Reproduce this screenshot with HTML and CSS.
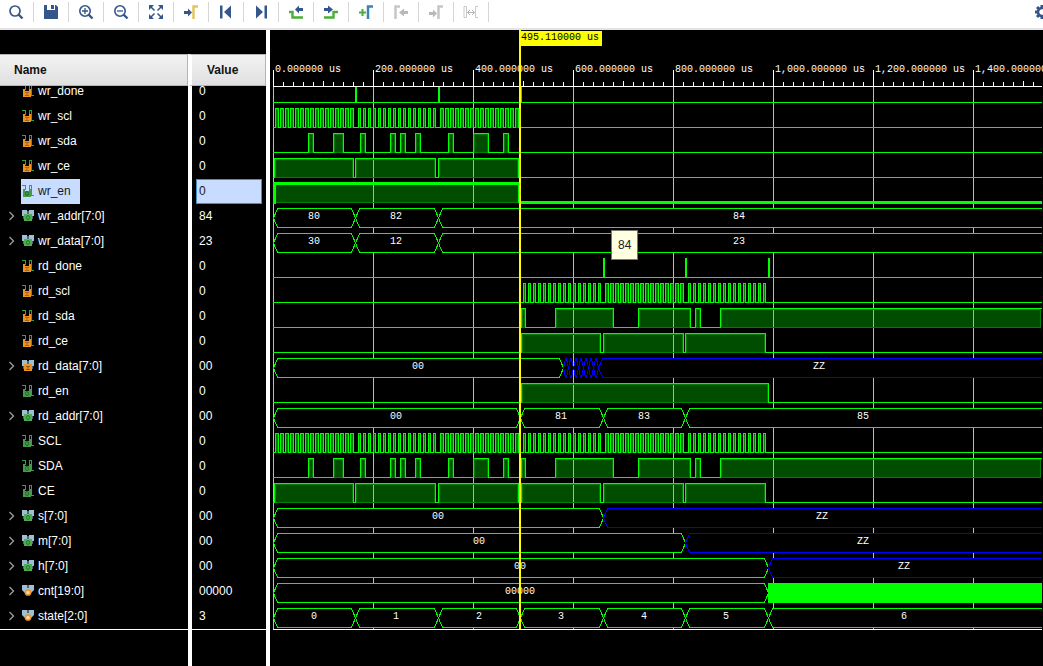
FILE: index.html
```html
<!DOCTYPE html>
<html lang="en">
<head>
<meta charset="utf-8">
<title>Waveform viewer</title>
<link rel="stylesheet" href="styles.css">
</head>
<body>
<svg class="defs" aria-hidden="true">
  <symbol id="pin-in" viewBox="0 0 12 13">
    <path d="M0 1.500h4M3.500 1v5M7.500 1v10M7 1.500h3M9.500 1v10.500M9 11.500h3" fill="none" stroke="#2fa548"/>
    <path d="M1 5h2v2h4V5h2v8H1z" fill="#f0921e"/>
    <path d="M3 8.500h4M5 8v4M3 11.500h4" fill="none" stroke="#a8651a"/>
  </symbol>
  <symbol id="pin-out" viewBox="0 0 12 13">
    <path d="M0 1.500h4M3.500 1v5M7.500 1v10M7 1.500h3M9.500 1v10.500M9 11.500h3" fill="none" stroke="#2fa548"/>
    <path d="M1 5h2v2h4V5h2v8H1z" fill="#459b4a"/>
    <ellipse cx="5" cy="9.500" rx="1.500" ry="2" fill="none" stroke="#25652c"/>
  </symbol>
  <symbol id="bus-in" viewBox="0 0 12 13">
    <path d="M0 1h5v2h2V1h5v6H0z" fill="#9cc0d6"/><path d="M1 7h10v3H1zM5 2h2v3H5z" fill="#55636b"/>
    <path d="M2 5h3l1 1 1-1h3v7H2z" fill="#f0921e"/><path d="M4 7.500h4M6 7v4M4 10.500h4" fill="none" stroke="#8f5812"/>
  </symbol>
  <symbol id="bus-out" viewBox="0 0 12 13">
    <path d="M0 1h5v2h2V1h5v6H0z" fill="#9cc0d6"/><path d="M1 7h10v3H1zM5 2h2v3H5z" fill="#55636b"/>
    <path d="M2 5h3l1 1 1-1h3v7H2z" fill="#4caf50"/><ellipse cx="6" cy="8.500" rx="1.500" ry="2" fill="none" stroke="#27722e"/>
  </symbol>
  <symbol id="bus-net" viewBox="0 0 12 13">
    <path d="M0 1h5v2h2V1h5v5L9 9H3L0 6z" fill="#9cc0d6"/><path d="M5 1h2v3H5z" fill="#55636b"/>
    <circle cx="6" cy="8.500" r="2.600" fill="#fbd9a0" stroke="#f0921e" stroke-width="1.500"/>
  </symbol>
  <symbol id="chevron" viewBox="0 0 6 10"><path d="M1 1l4 4-4 4" fill="none" stroke="#9a9a9a" stroke-width="1.400"/></symbol>
</svg>

<header class="toolbar" role="toolbar" aria-label="Waveform tools">
  <button class="tool" aria-label="Search"><svg viewBox="0 0 16 16"><circle cx="7" cy="7" r="5" fill="none" stroke="#34568b" stroke-width="1.700"/><path d="M10.500 10.500l4 4" stroke="#34568b" stroke-width="2.400"/></svg></button>
  <button class="tool" aria-label="Save"><svg viewBox="0 0 16 16"><path d="M1 1h3v5h8V1h1l2 2v12H1zM8 1h3v4H8z" fill="#34568b"/></svg></button>
  <button class="tool" aria-label="Zoom in"><svg viewBox="0 0 16 16"><circle cx="7" cy="7" r="5.200" fill="none" stroke="#34568b" stroke-width="1.600"/><path d="M4 7h6M7 4v6" stroke="#34568b" stroke-width="1.300"/><path d="M10.500 10.500l4 4" stroke="#34568b" stroke-width="2.400"/></svg></button>
  <button class="tool" aria-label="Zoom out"><svg viewBox="0 0 16 16"><circle cx="7" cy="7" r="5.200" fill="none" stroke="#34568b" stroke-width="1.600"/><path d="M4 7h6" stroke="#34568b" stroke-width="1.300"/><path d="M10.500 10.500l4 4" stroke="#34568b" stroke-width="2.400"/></svg></button>
  <button class="tool" aria-label="Zoom fit"><svg viewBox="0 0 16 16"><path d="M1 1h5L1 6zM15 1h-5l5 5zM1 15h5l-5-5zM15 15h-5l5-5z" fill="#34568b"/><path d="M3 3l3.500 3.500M13 3L9.500 6.500M3 13l3.500-3.500M13 13L9.500 9.500" stroke="#34568b" stroke-width="1.500"/></svg></button>
  <button class="tool" aria-label="Go to cursor"><svg viewBox="0 0 16 16"><path d="M1 7h4V4.500l4 4-4 4V10H1z" fill="#34568b"/><path d="M10.500 15V2.500H15" fill="none" stroke="#e3c55c" stroke-width="2.500"/></svg></button>
  <button class="tool" aria-label="Go to start"><svg viewBox="0 0 16 16"><path d="M2 1.500h2.500v13H2zM13 1.500v13L6 8z" fill="#34568b"/></svg></button>
  <button class="tool" aria-label="Go to end"><svg viewBox="0 0 16 16"><path d="M11.500 1.500H14v13h-2.500zM3 1.500v13L10 8z" fill="#34568b"/></svg></button>
  <button class="tool" aria-label="Previous transition"><svg viewBox="0 0 16 16"><path d="M1 8h3.500v5.500H15" fill="none" stroke="#49b035" stroke-width="2.400"/><path d="M15 4h-4V1.500L7 5.500l4 4V7h4z" fill="#34568b"/></svg></button>
  <button class="tool" aria-label="Next transition"><svg viewBox="0 0 16 16"><path d="M1 13.500h9.500V8H15" fill="none" stroke="#49b035" stroke-width="2.400"/><path d="M1 4h4V1.500l5 4-5 4V7H1z" fill="#34568b"/></svg></button>
  <button class="tool" aria-label="Add marker"><svg viewBox="0 0 16 16"><path d="M1 8.500h7M4.500 5v7" stroke="#49b035" stroke-width="2"/><path d="M10 15V2.500h5" fill="none" stroke="#3c82b5" stroke-width="2.500"/></svg></button>
  <button class="tool" aria-label="Previous marker" disabled><svg viewBox="0 0 16 16"><path d="M2.500 15V2.500H7" fill="none" stroke="#c6c6c6" stroke-width="2.500"/><path d="M15 7h-4V4.500l-5 4 5 4V10h4z" fill="#b9b9b9"/></svg></button>
  <button class="tool" aria-label="Next marker" disabled><svg viewBox="0 0 16 16"><path d="M1 8h4V5.500l4 4-4 4V11H1z" fill="#b9b9b9"/><path d="M10.500 15V2.500H15" fill="none" stroke="#c6c6c6" stroke-width="2.500"/></svg></button>
  <button class="tool" aria-label="Swap cursors" disabled><svg viewBox="0 0 16 16"><path d="M1 2.500h2.500v11H1zM15 2.500h-2.500v11H15" fill="none" stroke="#c9c9c9"/><path d="M4 8.500h8M7 6L4.500 8.500 7 11M9 6l2.500 2.500L9 11" fill="none" stroke="#b4b4b4"/></svg></button>
  <button class="tool settings" aria-label="Settings"><svg viewBox="0 0 16 16"><path d="M8 1v14M1 8h14M3 3l10 10M13 3L3 13" stroke="#34568b" stroke-width="3"/><circle cx="8" cy="8" r="4" fill="#fff" stroke="#34568b" stroke-width="2.500"/></svg></button>
</header>

<main class="viewer">
  <section class="signals">
    <table class="signal-table">
      <thead><tr><th class="col-name">Name</th><th class="col-value">Value</th></tr></thead>
      <tbody>
        <tr class="scrolled"><td><div class="cell"><svg class="kind"><use href="#pin-in"/></svg>wr_done</div></td><td><div class="val">0</div></td></tr>
        <tr><td><div class="cell"><svg class="kind"><use href="#pin-in"/></svg>wr_scl</div></td><td><div class="val">0</div></td></tr>
        <tr><td><div class="cell"><svg class="kind"><use href="#pin-in"/></svg>wr_sda</div></td><td><div class="val">0</div></td></tr>
        <tr><td><div class="cell"><svg class="kind"><use href="#pin-in"/></svg>wr_ce</div></td><td><div class="val">0</div></td></tr>
        <tr class="selected"><td><div class="cell"><svg class="kind"><use href="#pin-out"/></svg>wr_en</div></td><td><div class="val">0</div></td></tr>
        <tr><td><div class="cell bus"><button class="expand" aria-label="Expand wr_addr"><svg><use href="#chevron"/></svg></button><svg class="kind"><use href="#bus-out"/></svg>wr_addr[7:0]</div></td><td><div class="val">84</div></td></tr>
        <tr><td><div class="cell bus"><button class="expand" aria-label="Expand wr_data"><svg><use href="#chevron"/></svg></button><svg class="kind"><use href="#bus-out"/></svg>wr_data[7:0]</div></td><td><div class="val">23</div></td></tr>
        <tr><td><div class="cell"><svg class="kind"><use href="#pin-in"/></svg>rd_done</div></td><td><div class="val">0</div></td></tr>
        <tr><td><div class="cell"><svg class="kind"><use href="#pin-in"/></svg>rd_scl</div></td><td><div class="val">0</div></td></tr>
        <tr><td><div class="cell"><svg class="kind"><use href="#pin-in"/></svg>rd_sda</div></td><td><div class="val">0</div></td></tr>
        <tr><td><div class="cell"><svg class="kind"><use href="#pin-in"/></svg>rd_ce</div></td><td><div class="val">0</div></td></tr>
        <tr><td><div class="cell bus"><button class="expand" aria-label="Expand rd_data"><svg><use href="#chevron"/></svg></button><svg class="kind"><use href="#bus-in"/></svg>rd_data[7:0]</div></td><td><div class="val">00</div></td></tr>
        <tr><td><div class="cell"><svg class="kind"><use href="#pin-out"/></svg>rd_en</div></td><td><div class="val">0</div></td></tr>
        <tr><td><div class="cell bus"><button class="expand" aria-label="Expand rd_addr"><svg><use href="#chevron"/></svg></button><svg class="kind"><use href="#bus-out"/></svg>rd_addr[7:0]</div></td><td><div class="val">00</div></td></tr>
        <tr><td><div class="cell"><svg class="kind"><use href="#pin-out"/></svg>SCL</div></td><td><div class="val">0</div></td></tr>
        <tr><td><div class="cell"><svg class="kind"><use href="#pin-out"/></svg>SDA</div></td><td><div class="val">0</div></td></tr>
        <tr><td><div class="cell"><svg class="kind"><use href="#pin-out"/></svg>CE</div></td><td><div class="val">0</div></td></tr>
        <tr><td><div class="cell bus"><button class="expand" aria-label="Expand s"><svg><use href="#chevron"/></svg></button><svg class="kind"><use href="#bus-out"/></svg>s[7:0]</div></td><td><div class="val">00</div></td></tr>
        <tr><td><div class="cell bus"><button class="expand" aria-label="Expand m"><svg><use href="#chevron"/></svg></button><svg class="kind"><use href="#bus-out"/></svg>m[7:0]</div></td><td><div class="val">00</div></td></tr>
        <tr><td><div class="cell bus"><button class="expand" aria-label="Expand h"><svg><use href="#chevron"/></svg></button><svg class="kind"><use href="#bus-out"/></svg>h[7:0]</div></td><td><div class="val">00</div></td></tr>
        <tr><td><div class="cell bus"><button class="expand" aria-label="Expand cnt"><svg><use href="#chevron"/></svg></button><svg class="kind"><use href="#bus-net"/></svg>cnt[19:0]</div></td><td><div class="val">00000</div></td></tr>
        <tr><td><div class="cell bus"><button class="expand" aria-label="Expand state"><svg><use href="#chevron"/></svg></button><svg class="kind"><use href="#bus-net"/></svg>state[2:0]</div></td><td><div class="val">3</div></td></tr>
        <tr class="filler"><td></td><td></td></tr>
      </tbody>
    </table>
  </section>
  <section class="waves">
    <svg id="plot" class="plot" role="img" aria-label="Signal waveforms"></svg>
    <div class="tooltip" role="tooltip">84</div>
  </section>
</main>
<script src="waves.js"></script>
</body>
</html>
```

FILE: styles.css
```css
* { box-sizing: border-box; }

body {
  margin: 0;
  min-height: 100vh;
  display: flex;
  flex-direction: column;
  overflow: hidden;
  background: #000;
  color: #fff;
  font: 12px/16px "Liberation Sans", Arial, sans-serif;
}

.defs { display: none; }

button {
  margin: 0;
  padding: 0;
  border: 0;
  background: none;
}

.toolbar {
  display: flex;
  align-items: flex-start;
  height: 30px;
  padding-top: 2px;
  overflow: hidden;
  background: #fff;
  border-bottom: 2px solid #e4e4e6;
}

.tool {
  flex: none;
  display: flex;
  align-items: center;
  justify-content: center;
  width: 35px;
  height: 20px;
  padding-right: 1px;
  border-right: 1px solid #d6d6d6;
}

.tool:first-child { width: 34px; }
.tool svg { width: 16px; height: 16px; }

.tool.settings {
  width: 16px;
  margin-left: auto;
  margin-right: -7px;
  padding: 0;
  border: 0;
}

.viewer {
  flex: 1;
  display: flex;
}

.signals {
  flex: none;
  display: flex;
  width: 270px;
  padding-top: 24px;
  border-right: 4px solid #fff;
}

.signal-table {
  width: 100%;
  table-layout: fixed;
  border-spacing: 0;
}

th {
  position: relative;
  z-index: 1;
  height: 32px;
  padding: 0 14px;
  text-align: left;
  color: #111;
  background: linear-gradient(#f3f3f3, #dfdfe1);
  background-clip: padding-box;
  border: 1px solid #b4b4b6;
  border-left: 0;
}

.col-name { width: 188px; }

.col-value {
  padding-left: 15px;
  border-left: 4px solid #fff;
}

td { height: 25px; padding: 0; }
td + td { border-left: 4px solid #fff; }

.cell {
  display: flex;
  align-items: center;
  gap: 4px;
  width: max-content;
  height: 25px;
  margin-left: 21px;
  padding: 0 9px 2px 1px;
}

.cell.bus { margin-left: 8px; padding-left: 0; }

.kind { width: 12px; height: 13px; }

.expand {
  display: flex;
  align-items: center;
  width: 10px;
  height: 16px;
}

.expand svg { width: 7px; height: 10px; }

.val {
  height: 25px;
  margin: 0 4px;
  padding: 0 2px;
  line-height: 22px;
  border: 1px solid transparent;
}

.scrolled td { height: 18px; }
.scrolled .cell, .scrolled .val { margin-top: -7px; }

.selected .cell, .selected .val { background: #c8dcff; color: #1a1a1a; }
.selected .val { border-color: #3f8ed0; }

.filler td { height: auto; border-top: 1px solid #fff; }

.waves {
  position: relative;
  flex: 1;
  min-width: 0;
  display: flex;
}

.plot {
  width: 100%;
  min-height: 601px;
  shape-rendering: crispEdges;
  font: 10px "Liberation Mono", monospace;
}

.plot text { fill: #fff; }
.plot .mid { text-anchor: middle; }
.grid { stroke: #bcbcbc; }
.ruler { stroke: #fff; fill: none; }
.band { fill: #000; }
.trace { stroke: #0f0; fill: none; }
.trace.strong { stroke-width: 3px; }
.high { fill: rgba(0, 255, 0, 0.3); }
.inner { stroke: #008000; fill: none; }
.segment { stroke: #0f0; fill: none; }
.segment.float { stroke: #00f; }
.busy { fill: #0f0; }
.cursor, .flag { fill: #ff0; }
.plot .flag-text { fill: #000; }

.tooltip {
  position: absolute;
  left: 341px;
  top: 200px;
  padding: 6px;
  background: #ffffe1;
  border: 1px solid #77776a;
  color: #222;
}
```

FILE: waves.js
```js
// One horizontal unit is 2 us; x = 0 is the start of the simulation.
const plot = document.getElementById('plot');
const ORIGIN = 3, RULER = 56, FIRST = 61, STEP = 25, BOTTOM = 599, CURSOR = 246;

const burst = (start, width) =>
  Array.from({ length: 16 }, (_, k) => [start + 5 * k, start + 5 * k + width]);

function signals(end) {
  const wrScl = [...burst(2, 3), ...burst(85, 2), ...burst(167, 3)];
  const rdScl = [...burst(250, 2), ...burst(332, 3), ...burst(415, 2)];
  const wrSda = [[35, 40], [60, 70], [87, 92], [117, 122], [127, 132], [142, 147], [175, 180], [200, 215], [230, 235]];
  const rdSda = [[248, 252], [282, 340], [365, 417], [422, 427], [447, end]];
  const wrCe = [[1, 80], [82, 162], [165, 245]];
  const rdCe = [[248, 327], [330, 410], [412, 492]];
  const toggles = Array.from({ length: 7 }, (_, k) => [290 + 5 * k, 295 + 5 * k, '', 'float']);
  return [
    { bits: [[82, 83], [165, 166], [247, 248]] },
    { bits: wrScl },
    { bits: wrSda },
    { bits: wrCe },
    { bits: [[1, 246]], strong: true },
    { bus: [[0, 82, '80'], [82, 165, '82'], [165, end, '84']] },
    { bus: [[0, 82, '30'], [82, 165, '12'], [165, end, '23']] },
    { bits: [[330, 331], [412, 413], [495, 496]] },
    { bits: rdScl },
    { bits: rdSda },
    { bits: rdCe },
    { bus: [[0, 290, '00'], ...toggles, [325, end, 'ZZ', 'float']] },
    { bits: [[248, 495]] },
    { bus: [[0, 247, '00'], [247, 330, '81'], [330, 412, '83'], [412, end, '85']] },
    { bits: [...wrScl, ...rdScl] },
    { bits: [...wrSda, ...rdSda] },
    { bits: [...wrCe, ...rdCe] },
    { bus: [[0, 330, '00'], [330, end, 'ZZ', 'float']] },
    { bus: [[0, 412, '00'], [412, end, 'ZZ', 'float']] },
    { bus: [[0, 495, '00'], [495, end, 'ZZ', 'float']] },
    { bus: [[0, 495, '00000'], [495, end, '', 'busy']] },
    { bus: [[0, 82, '0'], [82, 165, '1'], [165, 247, '2'], [247, 330, '3'], [330, 412, '4'], [412, 495, '5'], [495, end, '6']] },
  ];
}

function drawBits(sig, hi, lo, end) {
  let line = `M0 ${lo + 0.5}`, out = '';
  for (const [a, b] of sig.bits) {
    if (b - a > 1) {
      out += `<rect class="high" x="${a}" y="${hi}" width="${b - a}" height="${lo - hi}"/>`;
      out += `<path class="inner" d="M${a + 1.5} ${lo + 0.5}V${hi + 1.5}H${b - 0.5}V${lo + 0.5}z"/>`;
    }
    line += `H${a + 0.5}V${hi + 0.5}H${b + 0.5}`;
    if (b < end) line += `V${lo + 0.5}`;
    line += `M${b + 0.5} ${lo + 0.5}`;
    if (b - a === 1) line += `H${a + 0.5}`;
  }
  if (sig.bits[sig.bits.length - 1][1] < end) line += `H${end + 1}`;
  // The line under a high level is the darker inner one.
  return out + `<path class="trace${sig.strong ? ' strong' : ''}" d="${line}"/>`;
}

function drawBus(sig, hi, lo, end) {
  const top = hi + 0.5, bottom = lo + 0.5, mid = (top + bottom) / 2;
  return sig.bus.map(([a, b, text, kind]) => {
    if (kind === 'busy') return `<rect class="busy" x="${a}" y="${hi}" width="${b - a + 1}" height="${lo - hi + 1}"/>`;
    const s = b - a < 8 ? 2 : 4, l = a + 0.5, r = b + 0.5;
    const right = b === end ? `H${r}V${bottom}` : `H${r - s}L${r} ${mid}L${r - s} ${bottom}`;
    const fill = `<path class="band" d="M${l} ${mid}L${l + s} ${top}${right}H${l + s}z"/>`;
    const tail = b === end ? `H${r}M${r} ${bottom}` : `H${r - s}L${r} ${mid}L${r - s} ${bottom}`;
    return fill + `<path class="segment ${kind || ''}" d="M${l} ${mid}L${l + s} ${top}${tail}H${l + s}L${l} ${mid}"/>` +
      (text ? `<text class="mid" x="${Math.floor((a + b) / 2)}" y="${hi + 11}">${text}</text>` : '');
  }).join('');
}

function draw() {
  const end = plot.clientWidth - ORIGIN - 2;
  let grid = '', ticks = `M0 ${RULER + 0.5}H${end + 1}`, labels = '', rows = '';
  for (let x = 0; x <= end; x += 10) {
    const major = x % 100 === 0;
    ticks += `M${x + 0.5} ${major ? 40 : x % 50 === 0 ? 51 : 52}V${RULER}`;
    if (major) {
      grid += `M${x + 0.5} ${RULER}V${BOTTOM}`;
      labels += `<text x="${x + 2}" y="42">${(x * 2).toLocaleString('en-US')}.000000 us</text>`;
    }
  }
  signals(end).forEach((sig, i) => {
    const hi = FIRST + STEP * i - 8, lo = hi + 19;
    rows += sig.bits ? drawBits(sig, hi, lo, end) : drawBus(sig, hi, lo, end);
  });
  plot.innerHTML = `<g transform="translate(${ORIGIN} 0)">
    <path class="grid" d="${grid}"/>${rows}
    <rect class="band" x="-3" y="0" width="${end + 5}" height="${RULER}"/>
    <path class="ruler" d="${ticks}M0 ${BOTTOM + 0.5}H${end + 1}"/>${labels}
    <rect class="cursor" x="${CURSOR}" y="0" width="2" height="${BOTTOM}"/>
    <rect class="flag" x="${CURSOR + 1}" y="1" width="82" height="15"/>
    <text class="flag-text" x="${CURSOR + 2}" y="10">495.110000 us</text></g>`;
}

draw();
window.addEventListener('resize', draw);
```
